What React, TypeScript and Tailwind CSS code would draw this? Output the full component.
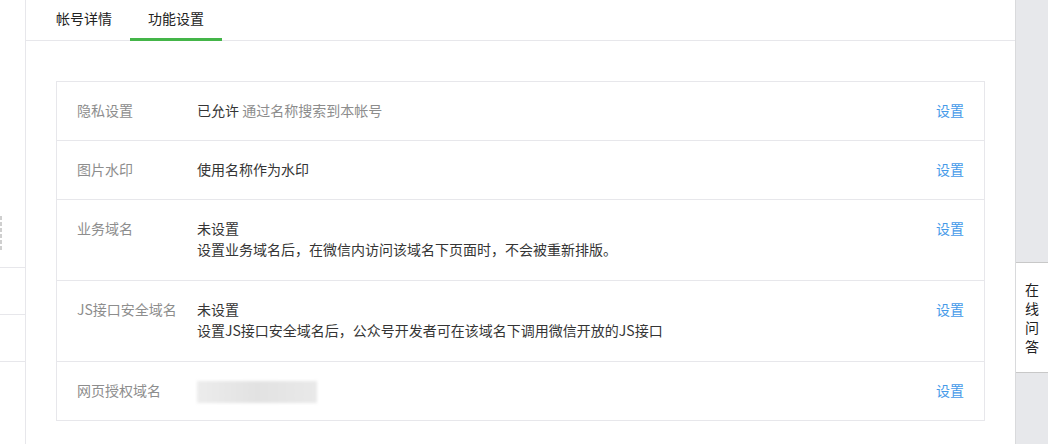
const FONT = '"Noto Sans CJK SC", "Microsoft YaHei", sans-serif'

interface SettingRow {
  label: string
  value: React.ReactNode
  desc?: string
  blurred?: boolean
}

const ROWS: SettingRow[] = [
  {
    label: '隐私设置',
    value: (
      <>
        已允许 <span className="text-[#8d8d8d]">通过名称搜索到本帐号</span>
      </>
    ),
  },
  { label: '图片水印', value: '使用名称作为水印' },
  {
    label: '业务域名',
    value: '未设置',
    desc: '设置业务域名后，在微信内访问该域名下页面时，不会被重新排版。',
  },
  {
    label: 'JS接口安全域名',
    value: '未设置',
    desc: '设置JS接口安全域名后，公众号开发者可在该域名下调用微信开放的JS接口',
  },
  { label: '网页授权域名', value: null, blurred: true },
]

function Sidebar() {
  return (
    <div className="flex w-[26px] shrink-0 flex-col border-r border-[#e7e7eb]">
      <div className="h-[216px]" />
      {/* scrollbar grip */}
      <div className="flex flex-col gap-[2px]">
        {[0, 1, 2, 3, 4, 5].map((i) => (
          <div key={i} className="h-[4px] w-[2px] bg-[#cfcfcf]" />
        ))}
      </div>
      <div className="h-[17px]" />
      <div className="h-[47px] border-t border-[#e7e7eb]" />
      <div className="h-[47px] border-t border-[#e7e7eb]" />
      <div className="border-t border-[#e7e7eb]" />
    </div>
  )
}

function Tabs() {
  return (
    <div className="flex h-[41px] border-b border-[#e7e7eb] pl-[12px]">
      <div className="flex w-[92px] items-center justify-center pb-[4px] text-[14px] text-[#222]">
        帐号详情
      </div>
      <div className="relative flex w-[92px] items-center justify-center pb-[4px] text-[14px] text-[#222]">
        功能设置
        <span className="absolute -bottom-px left-0 h-[3px] w-full bg-[#44b549]" />
      </div>
    </div>
  )
}

function SettingsTable() {
  return (
    <div className="mt-[40px] ml-[30px] mr-[30px] border border-[#e7e7eb]">
      {ROWS.map((row, i) => (
        <div
          key={row.label}
          className={`flex px-[20px] pt-[18px] pb-[20px] text-[14px] ${i > 0 ? 'border-t border-[#e7e7eb]' : ''}`}
        >
          <div className="w-[120px] shrink-0 leading-[20px] text-[#8d8d8d]">{row.label}</div>
          <div className="flex-1 text-[#353535]">
            {row.blurred ? (
              <div className="flex h-[20px] items-center">
                <div className="mt-[3px] h-[22px] w-[120px] bg-gradient-to-r from-[#ececec] via-[#e2e2e2] to-[#e9e9e9] blur-[1.5px]" />
              </div>
            ) : (
              <>
                <div className="leading-[20px]">{row.value}</div>
                {row.desc && <div className="leading-[22px]">{row.desc}</div>}
              </>
            )}
          </div>
          <a className="leading-[20px] text-[#459ae9]">设置</a>
        </div>
      ))}
    </div>
  )
}

function HelpStrip() {
  return (
    <div className="flex w-[33px] shrink-0 flex-col border-l border-[#d9dadc] bg-[#e7e8eb]">
      <div className="h-[262px]" />
      <div className="flex h-[111px] flex-col items-center border-y border-[#c8c8c8] bg-white pt-[17px] text-[14px] leading-[19px] text-[#222]">
        <span>在</span>
        <span>线</span>
        <span>问</span>
        <span>答</span>
      </div>
    </div>
  )
}

export default function App() {
  return (
    <div className="flex h-[444px] w-[1048px] overflow-hidden bg-white" style={{ fontFamily: FONT }}>
      <Sidebar />
      <div className="flex-1">
        <Tabs />
        <SettingsTable />
      </div>
      <HelpStrip />
    </div>
  )
}
